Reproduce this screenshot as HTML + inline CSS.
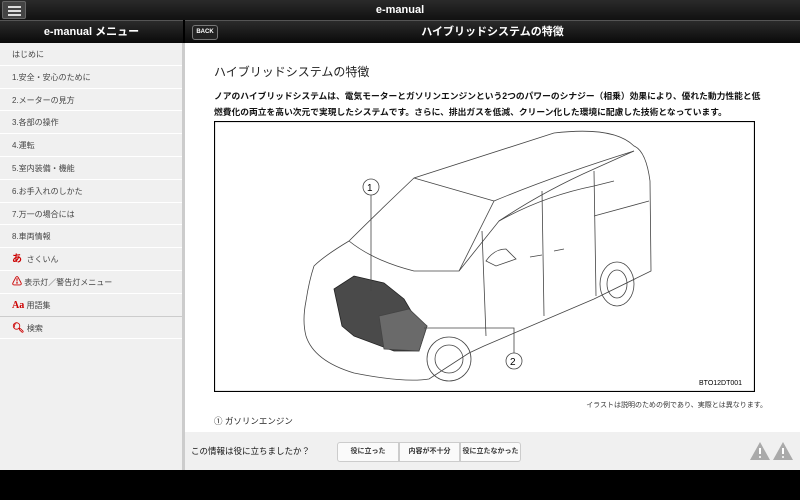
<!DOCTYPE html>
<html><head><meta charset="utf-8"><style>
*{margin:0;padding:0;box-sizing:border-box}
body{width:800px;height:500px;overflow:hidden;background:#000;font-family:"Liberation Sans","Noto Sans CJK JP",sans-serif;position:relative}
.top{position:absolute;left:0;top:0;width:800px;height:20px;background:linear-gradient(#2a2a2a,#111);color:#fff;font-size:11px;font-weight:bold;text-align:center;line-height:20px}
.hb{position:absolute;left:2px;top:1px;width:24px;height:18px;background:#444;border:1px solid #666;border-radius:2px}
.hb i{position:absolute;left:5px;width:13px;height:2px;background:#ddd}
.bar{position:absolute;top:20px;height:23px;background:linear-gradient(#2b2b2b,#0a0a0a);color:#fff;font-size:11px;font-weight:bold;text-align:center;line-height:23px;border-top:1px solid #555}
.side{position:absolute;left:0;top:43px;width:185px;height:427px;background:#f0f0f0;border-right:3px solid #ccc}
.side div{height:22.8px;border-bottom:1px solid #fff;font-size:8px;color:#444;line-height:24px;padding-left:12px;white-space:nowrap}
.main{position:absolute;left:185px;top:43px;width:615px;height:389px;background:#fff}
.back{position:absolute;left:192px;top:25px;width:26px;height:15px;background:#222;border:1px solid #777;border-radius:3px;color:#fff;font-size:6px;font-weight:bold;line-height:13px;text-align:center}
.fb{position:absolute;left:185px;top:432px;width:615px;height:38px;background:#f0f0f0}
.btn{position:absolute;top:10px;height:20px;background:#fafafa;border:1px solid #ccc;font-size:7px;font-weight:bold;color:#333;text-align:center;line-height:18px;white-space:nowrap}
</style></head><body>
<div class="top">e-manual</div>
<div class="hb"><i style="top:4px"></i><i style="top:8px"></i><i style="top:12px"></i></div>
<div class="bar" style="left:0;width:183px">e-manual メニュー</div>
<div class="bar" style="left:185px;width:615px">ハイブリッドシステムの特徴</div>
<div class="back">BACK</div>
<div class="side">
<div>はじめに</div><div>1.安全・安心のために</div><div>2.メーターの見方</div><div>3.各部の操作</div><div>4.運転</div><div>5.室内装備・機能</div><div>6.お手入れのしかた</div><div>7.万一の場合には</div><div>8.車両情報</div>
<div><b style="color:#c00;font-size:10px">あ</b>&nbsp; さくいん</div>
<div><b style="color:#c00;font-size:10px">⚠</b> 表示灯／警告灯メニュー</div>
<div style="border-bottom:1px solid #ccc"><b style="color:#c00;font-size:10px;font-family:'Liberation Serif',serif">Aa</b> 用語集</div>
<div><b style="color:#c00;font-size:10px">🔍︎</b> 検索</div>
</div>
<div class="main">
<div style="position:absolute;left:29px;top:20px;font-size:12px;color:#222">ハイブリッドシステムの特徴</div>
<div style="position:absolute;left:29px;top:46px;width:552px;font-size:8.75px;font-weight:bold;line-height:15.5px;color:#111">ノアのハイブリッドシステムは、電気モーターとガソリンエンジンという2つのパワーのシナジー（相乗）効果により、優れた動力性能と低燃費化の両立を高い次元で実現したシステムです。さらに、排出ガスを低減、クリーン化した環境に配慮した技術となっています。</div>
<svg style="position:absolute;left:29px;top:78px" width="541" height="271" viewBox="0 0 541 271" fill="none" stroke="#444" stroke-width="0.8">
<rect x="0.5" y="0.5" width="540" height="270" stroke="#000" stroke-width="1.2"/>
<path d="M100 145 Q95 160 92 180 Q88 200 92 215 Q100 240 140 252 Q190 262 215 258 L255 232 L270 225 L380 178 L437 150 L436 60 Q432 30 420 25 Q400 5 340 12 L200 57 Q160 95 135 120 Q110 135 100 145Z"/>
<path d="M135 120 Q160 140 200 150 Q225 150 245 150 L280 80 L200 57"/>
<path d="M245 150 L285 100 Q330 70 380 48 L420 30"/>
<path d="M280 80 Q340 55 420 30"/>
<path d="M268 110 L272 215 M328 70 L330 195 M380 50 L382 175 M285 100 Q330 75 380 65 L400 60 M380 95 L435 80"/>
<path d="M272 140 Q280 128 292 128 L302 138 L282 145Z"/>
<path d="M316 136 L328 134 M340 130 L350 128"/>
<circle cx="235" cy="238" r="22"/><circle cx="235" cy="238" r="14"/>
<ellipse cx="403" cy="163" rx="17" ry="22"/><ellipse cx="403" cy="163" rx="10" ry="14"/>
<path d="M120 168 L140 155 L170 162 L190 178 L200 195 L213 205 L205 230 L180 230 L140 215 L128 205Z" fill="#4a4a4a" stroke="#222"/>
<path d="M165 195 L195 188 L213 205 L205 230 L170 228Z" fill="#6a6a6a"/>
<circle cx="157" cy="66" r="8" fill="#fff"/><text x="153" y="70" font-size="10" fill="#000" stroke="none" font-family="Liberation Sans">1</text>
<path d="M157 74 L157 170"/>
<path d="M210 207 L300 207 L300 232"/>
<circle cx="300" cy="240" r="8" fill="#fff"/><text x="296" y="244" font-size="10" fill="#000" stroke="none" font-family="Liberation Sans">2</text>
<text x="485" y="264" font-size="7" fill="#000" stroke="none" font-family="Liberation Sans">BTO12DT001</text>
</svg>
<div style="position:absolute;right:33px;top:357px;font-size:7px;color:#333">イラストは説明のための例であり、実際とは異なります。</div>
<div style="position:absolute;left:29px;top:372px;font-size:8.5px;color:#222">① ガソリンエンジン</div>
</div>
<div class="fb">
<div style="position:absolute;left:6px;top:13px;font-size:8.5px;color:#111">この情報は役に立ちましたか？</div>
<div class="btn" style="left:152px;width:62px;border-radius:3px 0 0 3px">役に立った</div>
<div class="btn" style="left:214px;width:61px">内容が不十分</div>
<div class="btn" style="left:275px;width:61px;border-radius:0 3px 3px 0">役に立たなかった</div>
<svg style="position:absolute;left:565px;top:9px" width="46" height="20"><path d="M10 1 L20 19 L0 19Z M33 1 L43 19 L23 19Z" fill="#aaa"/><path d="M10 7 V13 M33 7 V13" stroke="#fff" stroke-width="2"/><circle cx="10" cy="16" r="1" fill="#fff"/><circle cx="33" cy="16" r="1" fill="#fff"/></svg>
</div>
</body></html>
